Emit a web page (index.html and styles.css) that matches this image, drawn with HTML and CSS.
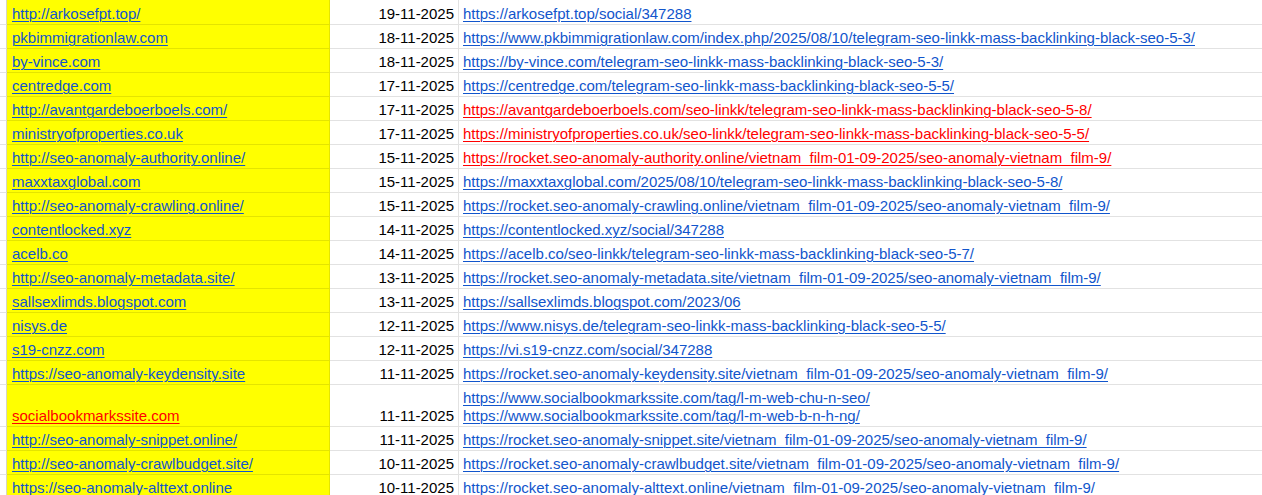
FILE: index.html
```html
<!DOCTYPE html>
<html>
<head>
<meta charset="utf-8">
<link rel="stylesheet" href="styles.css">
</head>
<body>
<div class="sheet">
  <div class="row first"><div class="c0"></div><div class="ca"><a>http://arkosefpt.top/</a></div><div class="cb">19-11-2025</div><div class="cc"><a>https://arkosefpt.top/social/347288</a></div></div>
  <div class="row"><div class="c0"></div><div class="ca"><a>pkbimmigrationlaw.com</a></div><div class="cb">18-11-2025</div><div class="cc"><a>https://www.pkbimmigrationlaw.com/index.php/2025/08/10/telegram-seo-linkk-mass-backlinking-black-seo-5-3/</a></div></div>
  <div class="row"><div class="c0"></div><div class="ca"><a>by-vince.com</a></div><div class="cb">18-11-2025</div><div class="cc"><a>https://by-vince.com/telegram-seo-linkk-mass-backlinking-black-seo-5-3/</a></div></div>
  <div class="row"><div class="c0"></div><div class="ca"><a>centredge.com</a></div><div class="cb">17-11-2025</div><div class="cc"><a>https://centredge.com/telegram-seo-linkk-mass-backlinking-black-seo-5-5/</a></div></div>
  <div class="row"><div class="c0"></div><div class="ca"><a>http://avantgardeboerboels.com/</a></div><div class="cb">17-11-2025</div><div class="cc"><a class="red">https://avantgardeboerboels.com/seo-linkk/telegram-seo-linkk-mass-backlinking-black-seo-5-8/</a></div></div>
  <div class="row"><div class="c0"></div><div class="ca"><a>ministryofproperties.co.uk</a></div><div class="cb">17-11-2025</div><div class="cc"><a class="red">https://ministryofproperties.co.uk/seo-linkk/telegram-seo-linkk-mass-backlinking-black-seo-5-5/</a></div></div>
  <div class="row"><div class="c0"></div><div class="ca"><a>http://seo-anomaly-authority.online/</a></div><div class="cb">15-11-2025</div><div class="cc"><a class="red">https://rocket.seo-anomaly-authority.online/vietnam_film-01-09-2025/seo-anomaly-vietnam_film-9/</a></div></div>
  <div class="row"><div class="c0"></div><div class="ca"><a>maxxtaxglobal.com</a></div><div class="cb">15-11-2025</div><div class="cc"><a>https://maxxtaxglobal.com/2025/08/10/telegram-seo-linkk-mass-backlinking-black-seo-5-8/</a></div></div>
  <div class="row"><div class="c0"></div><div class="ca"><a>http://seo-anomaly-crawling.online/</a></div><div class="cb">15-11-2025</div><div class="cc"><a>https://rocket.seo-anomaly-crawling.online/vietnam_film-01-09-2025/seo-anomaly-vietnam_film-9/</a></div></div>
  <div class="row"><div class="c0"></div><div class="ca"><a>contentlocked.xyz</a></div><div class="cb">14-11-2025</div><div class="cc"><a>https://contentlocked.xyz/social/347288</a></div></div>
  <div class="row"><div class="c0"></div><div class="ca"><a>acelb.co</a></div><div class="cb">14-11-2025</div><div class="cc"><a>https://acelb.co/seo-linkk/telegram-seo-linkk-mass-backlinking-black-seo-5-7/</a></div></div>
  <div class="row"><div class="c0"></div><div class="ca"><a>http://seo-anomaly-metadata.site/</a></div><div class="cb">13-11-2025</div><div class="cc"><a>https://rocket.seo-anomaly-metadata.site/vietnam_film-01-09-2025/seo-anomaly-vietnam_film-9/</a></div></div>
  <div class="row"><div class="c0"></div><div class="ca"><a>sallsexlimds.blogspot.com</a></div><div class="cb">13-11-2025</div><div class="cc"><a>https://sallsexlimds.blogspot.com/2023/06</a></div></div>
  <div class="row"><div class="c0"></div><div class="ca"><a>nisys.de</a></div><div class="cb">12-11-2025</div><div class="cc"><a>https://www.nisys.de/telegram-seo-linkk-mass-backlinking-black-seo-5-5/</a></div></div>
  <div class="row"><div class="c0"></div><div class="ca"><a>s19-cnzz.com</a></div><div class="cb">12-11-2025</div><div class="cc"><a>https://vi.s19-cnzz.com/social/347288</a></div></div>
  <div class="row"><div class="c0"></div><div class="ca"><a>https://seo-anomaly-keydensity.site</a></div><div class="cb">11-11-2025</div><div class="cc"><a>https://rocket.seo-anomaly-keydensity.site/vietnam_film-01-09-2025/seo-anomaly-vietnam_film-9/</a></div></div>
  <div class="row tall"><div class="c0"></div><div class="ca"><a class="red">socialbookmarkssite.com</a></div><div class="cb">11-11-2025</div><div class="cc"><a>https://www.socialbookmarkssite.com/tag/l-m-web-chu-n-seo/</a><a>https://www.socialbookmarkssite.com/tag/l-m-web-b-n-h-ng/</a></div></div>
  <div class="row"><div class="c0"></div><div class="ca"><a>http://seo-anomaly-snippet.online/</a></div><div class="cb">11-11-2025</div><div class="cc"><a>https://rocket.seo-anomaly-snippet.site/vietnam_film-01-09-2025/seo-anomaly-vietnam_film-9/</a></div></div>
  <div class="row"><div class="c0"></div><div class="ca"><a>http://seo-anomaly-crawlbudget.site/</a></div><div class="cb">10-11-2025</div><div class="cc"><a>https://rocket.seo-anomaly-crawlbudget.site/vietnam_film-01-09-2025/seo-anomaly-vietnam_film-9/</a></div></div>
  <div class="row"><div class="c0"></div><div class="ca"><a>https://seo-anomaly-alttext.online</a></div><div class="cb">10-11-2025</div><div class="cc"><a>https://rocket.seo-anomaly-alttext.online/vietnam_film-01-09-2025/seo-anomaly-vietnam_film-9/</a></div></div>
</div>
</body>
</html>
```
FILE: styles.css
```css
html, body {
  margin: 0;
  padding: 0;
  background: #ffffff;
  overflow: hidden;
}
.sheet {
  font-family: "Liberation Sans", Arial, sans-serif;
  font-size: 15px;
  color: #000000;
  width: 1262px;
}
.row {
  display: grid;
  grid-template-columns: 7px 323px 129px 803px;
  height: 24px;
}
.row.first { height: 25px; }
.row.tall { height: 42px; }
.row > div {
  box-sizing: border-box;
  border-right: 1px solid #e2e2e2;
  border-bottom: 1px solid #e2e2e2;
  display: flex;
  flex-direction: column;
  justify-content: flex-end;
  padding: 0 4px 1px 4px;
  line-height: 18px;
  white-space: nowrap;
  overflow: visible;
}
.row > .c0 {
  padding: 0;
  border-right-color: #d6d6c0;
}
.row > .ca {
  background: #ffff00;
  border-bottom-color: #e4e400;
  border-right-color: #e4e400;
  padding-left: 5px;
}
.row > .cb {
  text-align: right;
}
.row > .cc {
  border-right: none;
}
a {
  color: #1155cc;
  text-decoration: underline;
  text-decoration-thickness: 1px;
  text-underline-offset: 2px;
}
a.red {
  color: #ff0000;
}
```
